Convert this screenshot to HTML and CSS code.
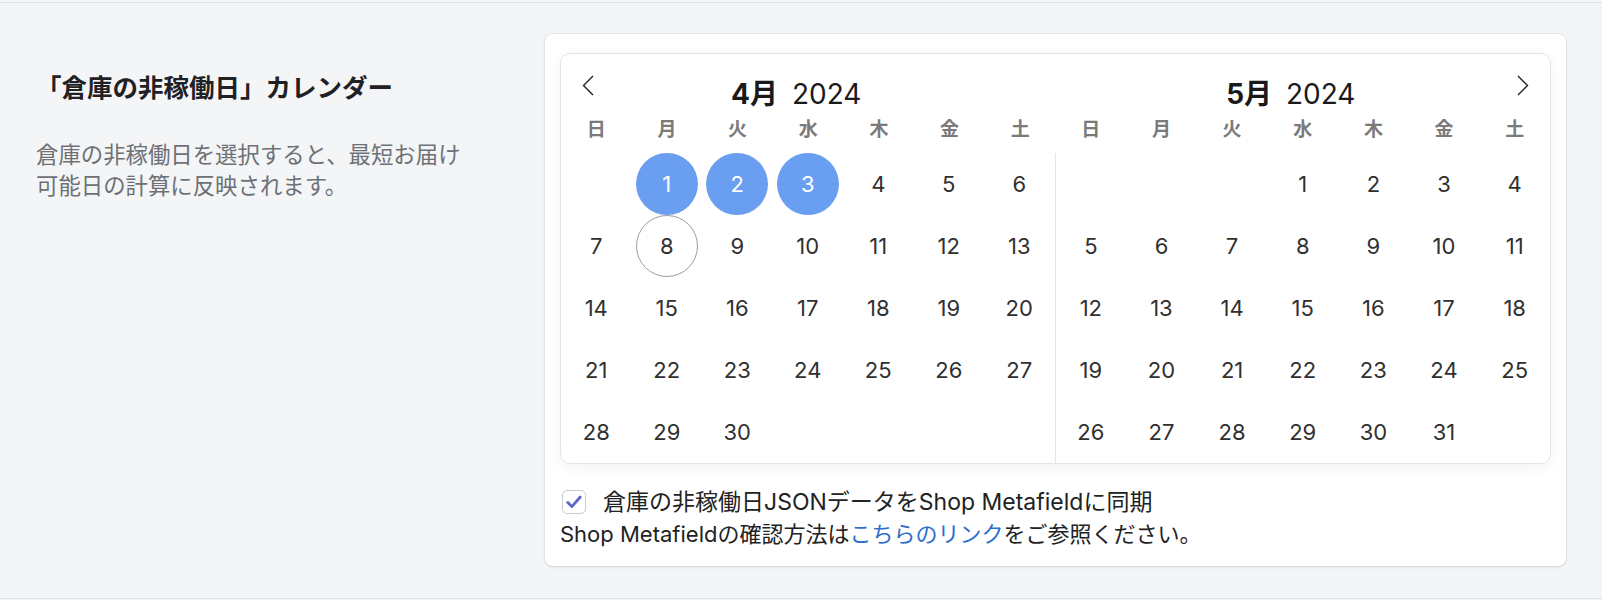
FILE: index.html
```html
<!DOCTYPE html>
<html lang="ja">
<head>
  <meta charset="UTF-8" />
  <meta name="viewport" content="width=device-width, initial-scale=1.0"/>
  <title>倉庫の非稼働日</title>
  <link rel="stylesheet" href="styles.css">
</head>
<body>

<div class="section">

  <!-- Left: description of the setting -->
  <div class="annotation">
    <h2 class="annotation-title">「倉庫の非稼働日」カレンダー</h2>
    <p class="annotation-text">倉庫の非稼働日を選択すると、最短お届け可能日の計算に反映されます。</p>
  </div>

  <!-- Right: the card with the two-month picker -->
  <div class="card">
    <div class="picker">
      <button class="nav prev" aria-label="前の月">
        <svg viewBox="0 0 12 21" width="12" height="21"><polyline points="11,1 1.5,10.5 11,20" /></svg>
      </button>
      <button class="nav next" aria-label="次の月">
        <svg viewBox="0 0 12 21" width="12" height="21"><polyline points="1,1 10.5,10.5 1,20" /></svg>
      </button>

      <!-- April -->
      <div class="month">
        <div class="month-title"><b>4月</b> 2024</div>
        <div class="weekdays">
          <span>日</span><span>月</span><span>火</span><span>水</span><span>木</span><span>金</span><span>土</span>
        </div>
        <div class="days">
          <div class="day empty"></div>
          <div class="day selected"><span>1</span></div>
          <div class="day selected"><span>2</span></div>
          <div class="day selected"><span>3</span></div>
          <div class="day"><span>4</span></div>
          <div class="day"><span>5</span></div>
          <div class="day"><span>6</span></div>
          <div class="day"><span>7</span></div>
          <div class="day today"><span>8</span></div>
          <div class="day"><span>9</span></div>
          <div class="day"><span>10</span></div>
          <div class="day"><span>11</span></div>
          <div class="day"><span>12</span></div>
          <div class="day"><span>13</span></div>
          <div class="day"><span>14</span></div>
          <div class="day"><span>15</span></div>
          <div class="day"><span>16</span></div>
          <div class="day"><span>17</span></div>
          <div class="day"><span>18</span></div>
          <div class="day"><span>19</span></div>
          <div class="day"><span>20</span></div>
          <div class="day"><span>21</span></div>
          <div class="day"><span>22</span></div>
          <div class="day"><span>23</span></div>
          <div class="day"><span>24</span></div>
          <div class="day"><span>25</span></div>
          <div class="day"><span>26</span></div>
          <div class="day"><span>27</span></div>
          <div class="day"><span>28</span></div>
          <div class="day"><span>29</span></div>
          <div class="day"><span>30</span></div>
        </div>
      </div>

      <!-- May -->
      <div class="month">
        <div class="month-title"><b>5月</b> 2024</div>
        <div class="weekdays">
          <span>日</span><span>月</span><span>火</span><span>水</span><span>木</span><span>金</span><span>土</span>
        </div>
        <div class="days">
          <div class="day empty"></div>
          <div class="day empty"></div>
          <div class="day empty"></div>
          <div class="day"><span>1</span></div>
          <div class="day"><span>2</span></div>
          <div class="day"><span>3</span></div>
          <div class="day"><span>4</span></div>
          <div class="day"><span>5</span></div>
          <div class="day"><span>6</span></div>
          <div class="day"><span>7</span></div>
          <div class="day"><span>8</span></div>
          <div class="day"><span>9</span></div>
          <div class="day"><span>10</span></div>
          <div class="day"><span>11</span></div>
          <div class="day"><span>12</span></div>
          <div class="day"><span>13</span></div>
          <div class="day"><span>14</span></div>
          <div class="day"><span>15</span></div>
          <div class="day"><span>16</span></div>
          <div class="day"><span>17</span></div>
          <div class="day"><span>18</span></div>
          <div class="day"><span>19</span></div>
          <div class="day"><span>20</span></div>
          <div class="day"><span>21</span></div>
          <div class="day"><span>22</span></div>
          <div class="day"><span>23</span></div>
          <div class="day"><span>24</span></div>
          <div class="day"><span>25</span></div>
          <div class="day"><span>26</span></div>
          <div class="day"><span>27</span></div>
          <div class="day"><span>28</span></div>
          <div class="day"><span>29</span></div>
          <div class="day"><span>30</span></div>
          <div class="day"><span>31</span></div>
        </div>
      </div>
    </div>

    <!-- Metafield sync option -->
    <div class="sync">
      <label class="check-row">
        <span class="checkbox">
          <svg viewBox="0 0 24 24" width="20" height="20"><polyline points="4.5,12.5 9.5,17.5 19.5,6" /></svg>
        </span>
        <span class="check-label">倉庫の非稼働日JSONデータをShop Metafieldに同期</span>
      </label>
      <div class="help">Shop Metafieldの確認方法は<a href="#">こちらのリンク</a>をご参照ください。</div>
    </div>
  </div>

</div>

</body>
</html>
```

FILE: styles.css
```css
* {
  box-sizing: border-box;
}

body {
  margin: 0;
  padding-top: 2px;
  background: #f4f5f7;
  font-family: Inter, "Noto Sans CJK JP", sans-serif;
  color: #202223;
}

.section {
  display: grid;
  grid-template-columns: 489px 1021px;
  column-gap: 20px;
  padding: 31px 36px 32px;
  border-top: 1px solid #dfe3e8;
  border-bottom: 1px solid #dfe3e8;
}

/* annotation column */
.annotation {
  padding-top: 38px;
}

.annotation-title {
  margin: 0;
  font-size: 25.5px;
  line-height: 32px;
  font-weight: 700;
  color: #1f2124;
}

.annotation-text {
  max-width: 440px;
  margin: 35px 0 0;
  font-size: 22.4px;
  line-height: 31px;
  color: #6d7175;
}

.card {
  background: #fff;
  border-radius: 8px;
  box-shadow: 0 0 0 1px rgba(63, 63, 68, 0.05), 0 1px 3px rgba(63, 63, 68, 0.15);
  padding: 19px 15px 16px;
}

/* date picker */
.picker {
  position: relative;
  display: grid;
  grid-template-columns: 1fr 1fr;
  border: 1px solid #e3e4e6;
  border-radius: 10px;
  box-shadow: 0 4px 14px rgba(0, 0, 0, 0.05);
}

.nav {
  position: absolute;
  top: 21px;
  width: 12px;
  height: 21px;
  padding: 0;
  border: 0;
  background: none;
  cursor: pointer;
}

.nav svg {
  display: block;
  fill: none;
  stroke: #202020;
  stroke-width: 1.4;
}

.nav.prev {
  left: 21px;
}

.nav.next {
  right: 21px;
}

.month-title {
  height: 40px;
  margin-top: 20px;
  padding-right: 24px;
  text-align: center;
  font-size: 28px;
  line-height: 40px;
  color: #1a1a1a;
}

.month-title b {
  margin-right: 6px;
  font-weight: 700;
}

.weekdays {
  display: grid;
  grid-template-columns: repeat(7, 1fr);
  height: 24px;
  margin: 4px 0 11px;
  line-height: 24px;
  text-align: center;
  font-size: 19px;
  font-weight: 700;
  color: #7a7a7a;
}

.days {
  display: grid;
  grid-template-columns: repeat(7, 1fr);
  grid-auto-rows: 62px;
}

.month:first-of-type .days {
  border-right: 1px solid #e4e4e4;
}

.day {
  display: flex;
  align-items: center;
  justify-content: center;
  font-size: 22px;
  color: #303030;
}

.day span {
  display: flex;
  align-items: center;
  justify-content: center;
  width: 62px;
  height: 62px;
  border-radius: 50%;
}

.day.selected span {
  background: #699ef0;
  color: #fff;
}

.day.today span {
  border: 1px solid #9a9ea3;
}

/* sync option below the picker */
.sync {
  margin-top: 22px;
  font-size: 22px;
  line-height: 32px;
  color: #202223;
}

.check-row {
  display: flex;
  align-items: center;
}

.check-label {
  font-size: 23px;
}

.checkbox {
  display: flex;
  align-items: center;
  justify-content: center;
  width: 24px;
  height: 24px;
  margin: 0 17px 0 2px;
  border: 1px solid #c9cccf;
  border-radius: 5px;
  background: #fff;
}

.checkbox svg {
  fill: none;
  stroke: #5c6ac4;
  stroke-width: 3.4;
  stroke-linecap: round;
  stroke-linejoin: round;
}

.help a {
  color: #2c6ecb;
  text-decoration: none;
}
```
